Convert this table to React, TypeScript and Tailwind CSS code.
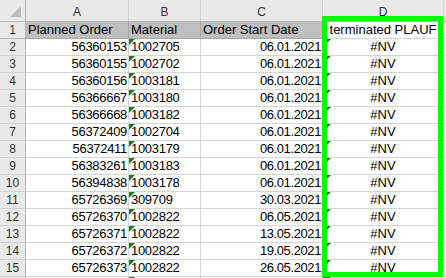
import React from "react";

const rows: [string, string, string][] = [
  ["56360153", "1002705", "06.01.2021"],
  ["56360155", "1002702", "06.01.2021"],
  ["56360156", "1003181", "06.01.2021"],
  ["56366667", "1003180", "06.01.2021"],
  ["56366668", "1003182", "06.01.2021"],
  ["56372409", "1002704", "06.01.2021"],
  ["56372411", "1003179", "06.01.2021"],
  ["56383261", "1003183", "06.01.2021"],
  ["56394838", "1003178", "06.01.2021"],
  ["65726369", "309709", "30.03.2021"],
  ["65726370", "1002822", "06.05.2021"],
  ["65726371", "1002822", "13.05.2021"],
  ["65726372", "1002822", "19.05.2021"],
  ["65726373", "1002822", "26.05.2021"],
  ["", "", ""],
];

function Tri() {
  return (
    <svg className="absolute left-0 top-0" width="6" height="6" viewBox="0 0 6 6">
      <polygon points="0,0 6,0 0,6" fill="#1e7a1e" />
    </svg>
  );
}

export default function App() {
  const font = { fontFamily: '"Liberation Sans", Arial, sans-serif' };
  return (
    <div
      className="relative w-[446px] h-[278px] overflow-hidden bg-white text-black"
      style={font}
    >
      {/* column header row */}
      <div className="flex h-[22px] bg-[#e9e9e9] border-b border-[#b4b4b4] text-[12px] leading-[16px] text-[#333]">
        <div className="relative w-[26px] shrink-0 border-r border-[#b4b4b4]">
          <svg className="absolute left-[10px] top-[6px]" width="12" height="12" viewBox="0 0 12 12">
            <polygon points="0,11 11,11 11,0" fill="#bdbdbd" />
          </svg>
        </div>
        <div className="w-[103px] shrink-0 border-r border-[#d0d0d0] pt-[4px] text-center">A</div>
        <div className="w-[72px] shrink-0 border-r border-[#d0d0d0] pt-[4px] text-center">B</div>
        <div className="w-[122px] shrink-0 border-r border-[#d0d0d0] pt-[4px] text-center">C</div>
        <div className="w-[121px] shrink-0 border-r border-[#d0d0d0] pt-[4px] text-center">D</div>
        <div className="flex-1" />
      </div>

      {/* row 1 */}
      <div className="flex h-[17px] text-[13px] leading-[16px]">
        <div className="w-[26px] shrink-0 bg-[#e9e9e9] border-r border-b border-[#b4b4b4] text-center text-[12px] text-[#333]">
          1
        </div>
        <div className="w-[103px] shrink-0 bg-[#bfbfbf] border-r border-b border-[#a6a6a6] pl-[2px] whitespace-nowrap">
          Planned Order
        </div>
        <div className="w-[72px] shrink-0 bg-[#bfbfbf] border-r border-b border-[#a6a6a6] pl-[2px] whitespace-nowrap">
          Material
        </div>
        <div className="w-[122px] shrink-0 bg-[#bfbfbf] border-r border-b border-[#a6a6a6] pl-[2px] whitespace-nowrap">
          Order Start Date
        </div>
        <div className="w-[121px] shrink-0 border-r border-b border-[#d4d4d4] text-center whitespace-nowrap">
          terminated PLAUF
        </div>
        <div className="flex-1 border-b border-[#d4d4d4]" />
      </div>

      {rows.map((r, i) => (
        <div key={i} className="flex h-[17px] text-[13px] leading-[16px]">
          <div className="w-[26px] shrink-0 bg-[#e9e9e9] border-r border-b border-[#b4b4b4] border-b-[#d0d0d0] text-center text-[12px] text-[#333]">
            {i < 14 ? i + 2 : ""}
          </div>
          <div className="w-[103px] shrink-0 border-r border-b border-[#d4d4d4] pr-[1px] text-right tracking-[-0.3px] whitespace-nowrap">
            {r[0]}
          </div>
          <div className="relative w-[72px] shrink-0 border-r border-b border-[#d4d4d4] pl-[2px] tracking-[-0.3px] whitespace-nowrap">
            <Tri />
            {r[1]}
          </div>
          <div className="w-[122px] shrink-0 border-r border-b border-[#d4d4d4] pr-[1px] text-right tracking-[-0.4px] whitespace-nowrap">
            {r[2]}
          </div>
          <div className="relative w-[121px] shrink-0 border-r border-b border-[#d4d4d4] text-center whitespace-nowrap">
            <svg className="absolute left-0 top-0" width="8" height="8" viewBox="0 0 8 8">
              <polygon points="0,0 8,0 0,8" fill="#1e7a1e" />
            </svg>
            {i < 14 ? "#NV" : ""}
          </div>
          <div className="flex-1 border-b border-[#d4d4d4]" />
        </div>
      ))}

      {/* green rectangle shape */}
      <div className="absolute left-[322px] top-[16px] w-[121px] h-[261px] border-[5px] border-[#00ff00]" />
    </div>
  );
}
